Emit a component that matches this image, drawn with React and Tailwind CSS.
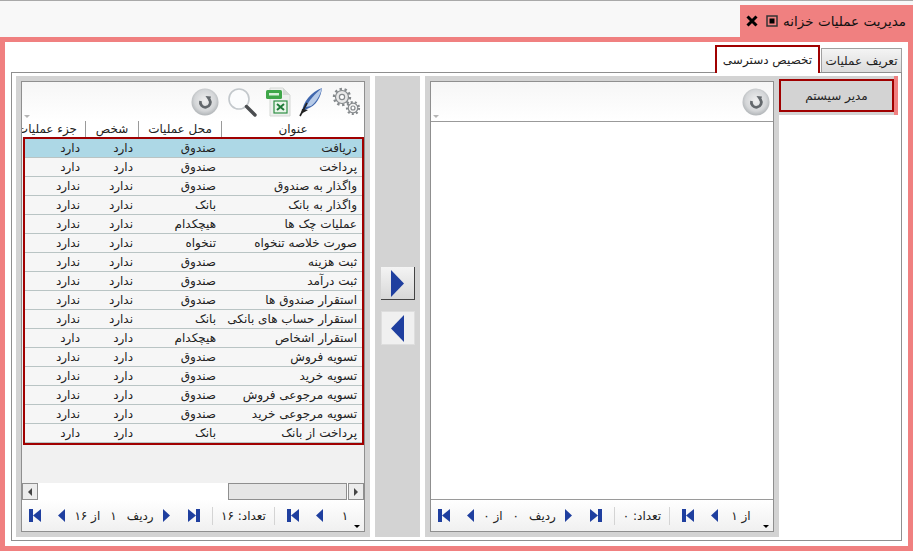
import { useId } from "react"

const ROWS = [
  ["دریافت", "صندوق", "دارد", "دارد"],
  ["پرداخت", "صندوق", "دارد", "دارد"],
  ["واگذار به صندوق", "صندوق", "ندارد", "ندارد"],
  ["واگذار به بانک", "بانک", "ندارد", "ندارد"],
  ["عملیات چک ها", "هیچکدام", "ندارد", "ندارد"],
  ["صورت خلاصه تنخواه", "تنخواه", "ندارد", "ندارد"],
  ["ثبت هزینه", "صندوق", "ندارد", "ندارد"],
  ["ثبت درآمد", "صندوق", "ندارد", "ندارد"],
  ["استقرار صندوق ها", "صندوق", "ندارد", "ندارد"],
  ["استقرار حساب های بانکی", "بانک", "ندارد", "ندارد"],
  ["استقرار اشخاص", "هیچکدام", "دارد", "دارد"],
  ["تسویه فروش", "صندوق", "دارد", "ندارد"],
  ["تسویه خرید", "صندوق", "دارد", "ندارد"],
  ["تسویه مرجوعی فروش", "صندوق", "دارد", "ندارد"],
  ["تسویه مرجوعی خرید", "صندوق", "دارد", "ندارد"],
  ["پرداخت از بانک", "بانک", "دارد", "دارد"],
]

const BLUE = "#1f3f9f"

const First = () => (
  <svg width="12" height="13" viewBox="0 0 12 13" className="shrink-0">
    <rect x="0" y="0" width="4" height="13" fill={BLUE} />
    <path d="M4 6.5 12 0v13z" fill={BLUE} />
  </svg>
)
const Last = () => (
  <svg width="12" height="13" viewBox="0 0 12 13" className="shrink-0">
    <rect x="8" y="0" width="4" height="13" fill={BLUE} />
    <path d="M8 6.5 0 0v13z" fill={BLUE} />
  </svg>
)
const Prev = () => (
  <svg width="7" height="13" viewBox="0 0 7 13" className="shrink-0">
    <path d="M0 6.5 7 0v13z" fill={BLUE} />
  </svg>
)
const Next = () => (
  <svg width="7" height="13" viewBox="0 0 7 13" className="shrink-0">
    <path d="M7 6.5 0 0v13z" fill={BLUE} />
  </svg>
)

const Refresh = () => {
  const id = useId()
  return (
    <svg width="28" height="28" viewBox="0 0 28 28">
      <defs>
        <radialGradient id={id} cx="50%" cy="45%" r="55%">
          <stop offset="0%" stopColor="#f0f0f0" />
          <stop offset="70%" stopColor="#d4d6d8" />
          <stop offset="100%" stopColor="#b0b4b7" />
        </radialGradient>
      </defs>
      <circle cx="14" cy="14" r="13.5" fill={`url(#${id})`} />
      <path d="M9.5 13a5 5 0 1 0 9 -1.5" fill="none" stroke="#63686c" strokeWidth="2.8" />
      <path d="M14.5 8 20 8.5l-1.5 5.5z" fill="#63686c" />
    </svg>
  )
}

const Search = () => (
  <svg width="30" height="30" viewBox="0 0 30 30">
    <circle cx="12" cy="12" r="10" fill="#fbfcfd" stroke="#c3c8cc" strokeWidth="1.6" />
    <path d="M19.5 19.5 28 28" stroke="#4a4d50" strokeWidth="3.4" strokeLinecap="round" />
  </svg>
)

const Excel = () => (
  <svg width="26" height="30" viewBox="0 0 26 30">
    <path d="M5 1h13l7 7v21H5z" fill="#eef0ee" stroke="#d5d8d5" />
    <path d="M18 1v7h7z" fill="#d5d9d5" />
    <rect x="1" y="3" width="16" height="9" rx="1.5" fill="#3fa648" />
    <rect x="4" y="6" width="10" height="2.5" fill="#d8efd8" />
    <rect x="9" y="14" width="13" height="12" fill="#e9f5e9" stroke="#2f8f45" strokeWidth="1.2" />
    <path d="m12 17 7 6m0-6-7 6" stroke="#1f7a38" strokeWidth="2" />
  </svg>
)

const Feather = () => (
  <svg width="24" height="30" viewBox="0 0 24 30">
    <path d="M3 25C4 15 12 5 23 1c-1 9-6 18-15 21z" fill="#3f66ad" />
    <path d="M7 20C10 13 16 7 23 1c-2 8-6 14-11 18z" fill="#b7cbe8" />
    <path d="M1 29 8 16" stroke="#222" strokeWidth="1.6" />
    <path d="M2 27c2-1 5-3 7-4l-6-1z" fill="#222" />
  </svg>
)

const Gears = () => (
  <svg width="30" height="30" viewBox="0 0 30 30" fill="none" stroke="#85898c">
    <circle cx="11" cy="10" r="6.5" strokeWidth="1.2" fill="#e8e8e8" />
    <circle cx="11" cy="10" r="8" strokeWidth="2.4" strokeDasharray="2.4 2.6" />
    <circle cx="11" cy="10" r="2.6" strokeWidth="1.2" fill="#fff" />
    <circle cx="22" cy="21" r="4.8" strokeWidth="1.2" fill="#f2f2f2" />
    <circle cx="22" cy="21" r="6" strokeWidth="2.2" strokeDasharray="2 2.2" />
    <circle cx="22" cy="21" r="2" strokeWidth="1.2" fill="#fff" />
  </svg>
)

const Footer = ({ pageOf, row, total, rowClass, countClass, pageClass }) => (
  <div className="relative h-[31px] shrink-0 flex items-center bg-gradient-to-b from-white to-[#f0f0f0] pl-[7px] text-[12px] text-[#222]">
    <First />
    <div className="ml-[17px]"><Prev /></div>
    <div dir="rtl" className={`${rowClass} flex justify-center gap-[10px] whitespace-nowrap`}>
      <span>ردیف</span>
      <span>{row}</span>
      <span>از {total}</span>
    </div>
    <Next />
    <div className="ml-[18px]"><Last /></div>
    <div className="ml-[12px] w-px h-[18px] bg-[#d4d4d4]" />
    <div dir="rtl" className={`${countClass} text-center whitespace-nowrap`}>تعداد: {total}</div>
    <div className="w-px h-[18px] bg-[#d4d4d4]" />
    <div className="ml-[12px]"><First /></div>
    <div className="ml-[17px]"><Prev /></div>
    <div dir="rtl" className={`${pageClass} text-center whitespace-nowrap`}>{pageOf}</div>
    <div className="absolute right-[4px] bottom-[3px] w-0 h-0 border-x-[3px] border-x-transparent border-t-[3px] border-t-black" />
  </div>
)

const SideFrame = ({ children }) => (
  <div className="w-[354px] shrink-0 bg-[#d3d3d3] p-[5px] flex">
    <div className="flex-1 min-w-0 flex flex-col border border-[#8f8f8f] bg-white">{children}</div>
  </div>
)

const Toolbar = ({ children }) => (
  <div className="relative h-[39px] shrink-0 flex items-center justify-end gap-[8px] pr-[3px] bg-gradient-to-b from-[#f6f6f6] to-white">
    {children}
    <div className="absolute left-[2px] bottom-[3px] w-0 h-0 border-x-[3px] border-x-transparent border-t-[3px] border-t-[#b5b5b5]" />
  </div>
)

export default function App() {
  return (
    <div
      className="w-[913px] h-[551px] overflow-hidden flex flex-col bg-white text-[12px] text-[#222]"
      style={{ fontFamily: "Tahoma, 'DejaVu Sans', 'Noto Sans', sans-serif" }}
    >
      {/* window title */}
      <div className="h-[37px] shrink-0 flex justify-end items-end bg-[#f8f8f8] border-t border-[#a9a9a9]">
        <div className="w-[173px] h-[32px] bg-[#f08080] flex items-center pl-[6px] pr-[7px]">
          <svg width="12" height="12" viewBox="0 0 12 12">
            <path d="M1.5 1.5l9 9m0-9-9 9" stroke="#000" strokeWidth="3" />
          </svg>
          <svg width="12" height="12" viewBox="0 0 12 12" className="ml-[8px]">
            <rect x="1" y="1" width="10" height="10" fill="none" stroke="#333" strokeWidth="1.5" />
            <rect x="3.5" y="3.5" width="5" height="5" fill="#000" />
          </svg>
          <div dir="rtl" className="flex-1 text-[13.5px] text-[#111] whitespace-nowrap">مدیریت عملیات خزانه</div>
        </div>
      </div>

      <div className="flex-1 min-h-0 border-[5px] border-[#f08080] bg-white flex flex-col px-[6px] pb-[5px]">
        {/* tabs */}
        <div className="h-[30px] shrink-0 flex justify-end items-end gap-px">
          <div dir="rtl" className="w-[105px] h-[28px] -mb-px z-10 border-2 border-b-0 border-[#a00000] bg-white flex items-center justify-center whitespace-nowrap">
            تخصیص دسترسی
          </div>
          <div dir="rtl" className="w-[81px] h-[24px] border border-b-0 border-[#a0a0a0] bg-gradient-to-b from-[#f4f4f4] to-[#dcdcdc] flex items-center justify-center whitespace-nowrap">
            تعریف عملیات
          </div>
        </div>

        <div className="flex-1 min-h-0 border border-[#8f8f8f] flex pt-[3px] pb-[3px] pl-[4px]">
          {/* left grid */}
          <SideFrame>
            <Toolbar>
              <Refresh />
              <Search />
              <Excel />
              <Feather />
              <Gears />
            </Toolbar>
            <div dir="rtl" className="h-[16px] leading-[16px] shrink-0 grid grid-cols-[143px_83px_53px_63px] bg-white overflow-hidden whitespace-nowrap">
              <div className="text-center border-l border-[#9a9a9a]">عنوان</div>
              <div className="text-center border-l border-[#9a9a9a]">محل عملیات</div>
              <div className="text-center border-l border-[#9a9a9a]">شخص</div>
              <div className="pr-[8px]">جزء عملیات</div>
            </div>
            <div className="flex-1 min-h-0 bg-[#f1f1f1] pl-px">
              <div dir="rtl" className="border-2 border-[#a00000]">
                {ROWS.map((r, i) => (
                  <div
                    key={i}
                    className={`h-[19px] leading-[19px] grid grid-cols-[140px_83px_53px_63px] border-b border-[#b9c4c4] whitespace-nowrap ${i === 0 ? "bg-[#add8e6]" : "bg-[#f6f6f6]"}`}
                  >
                    <div className="pr-[5px]">{r[0]}</div>
                    <div className="pr-[6px]">{r[1]}</div>
                    <div className="pr-[6px]">{r[2]}</div>
                    <div className="pr-[6px]">{r[3]}</div>
                  </div>
                ))}
              </div>
            </div>
            {/* scrollbar */}
            <div className="h-[17px] shrink-0 flex bg-white">
              <div className="w-[16px] flex items-center justify-center bg-[#ececec] border border-[#8f8f8f]">
                <div className="w-0 h-0 border-y-[4px] border-y-transparent border-r-[4px] border-r-[#444]" />
              </div>
              <div className="flex-1" />
              <div className="w-[119px] bg-[#e6e6e6] border border-[#8f8f8f]" />
              <div className="w-[16px] ml-px flex items-center justify-center bg-[#ececec] border border-[#8f8f8f]">
                <div className="w-0 h-0 border-y-[4px] border-y-transparent border-l-[4px] border-l-[#444]" />
              </div>
            </div>
            <Footer pageOf="۱" row="۱" total="۱۶" rowClass="w-[98px]" countClass="w-[61px]" pageClass="ml-[10px] w-[24px]" />
          </SideFrame>

          {/* move buttons */}
          <div className="w-[45px] shrink-0 mx-[5px] bg-[#d3d3d3] flex flex-col items-center pt-[191px] gap-[11px]">
            <button className="w-[34px] h-[33px] flex items-center justify-center bg-gradient-to-b from-[#f4f4f4] to-[#d8d8d8] border-b border-r border-[#444]">
              <svg width="13" height="27" viewBox="0 0 13 27"><path d="M13 13.5 0 0v27z" fill={BLUE} /></svg>
            </button>
            <button className="w-[34px] h-[34px] flex items-center justify-center bg-[#f0f0f0] border border-[#dedede]">
              <svg width="13" height="27" viewBox="0 0 13 27"><path d="M0 13.5 13 0v27z" fill={BLUE} /></svg>
            </button>
          </div>

          {/* right grid */}
          <SideFrame>
            <Toolbar>
              <Refresh />
            </Toolbar>
            <div className="flex-1 min-h-0 bg-white border-t border-b border-[#9a9a9a]" />
            <Footer pageOf="از ۱" row="۰" total="۰" rowClass="w-[91px]" countClass="w-[54px]" pageClass="ml-[13px] w-[20px]" />
          </SideFrame>

          {/* user list */}
          <div className="flex-1 min-w-0">
            <div className="w-[119px] bg-[#d3d3d3] border-r-[4px] border-[#f08080] py-[3px]">
              <div dir="rtl" className="h-[33px] border-2 border-[#a00000] bg-[#d3d3d3] flex items-center justify-center">
                مدیر سیستم
              </div>
            </div>
          </div>
        </div>
      </div>
    </div>
  )
}
